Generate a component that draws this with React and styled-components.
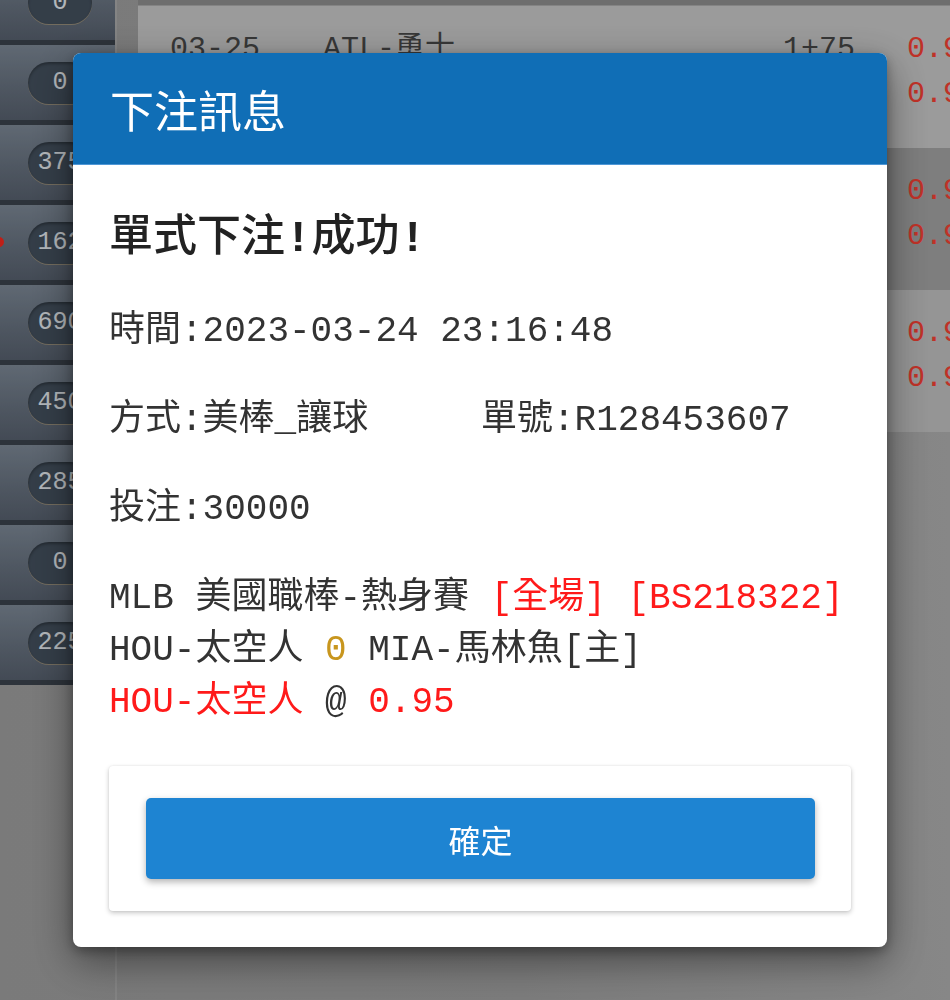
import React from "react";
import styled, { createGlobalStyle } from "styled-components";

const MONO = `"Courier New", "Liberation Mono", "Noto Sans CJK TC", monospace`;
const CJK = `"Noto Sans CJK TC", "Noto Sans", sans-serif`;

const GlobalStyle = createGlobalStyle`
  html, body { margin: 0; padding: 0; }
  body {
    width: 950px;
    height: 1000px;
    overflow: hidden;
    background: #a5a5a5;
    font-family: ${MONO};
  }
  * { box-sizing: border-box; }
`;

const Page = styled.div`
  display: flex;
  width: 950px;
  height: 1000px;
  overflow: hidden;
  background: linear-gradient(90deg, #a3a3a3 0%, #a6a6a6 55%, #b4b4b4 100%);
`;

const Sidebar = styled.aside`
  width: 117px;
  flex-shrink: 0;
  height: 100%;
  overflow: hidden;
  border-right: 2px solid #b0b0b0;
`;

const TileList = styled.div`
  display: flex;
  flex-direction: column;
  margin-top: -35px;
`;

const Tile = styled.div`
  position: relative;
  height: 80px;
  display: flex;
  align-items: center;
  padding-left: 28px;
  background: linear-gradient(180deg, #808c9a 0%, #6a7583 55%, #5a6472 100%);
  border-bottom: 5px solid #3d454f;
`;

const Pill = styled.span`
  width: 64px;
  height: 42px;
  border-radius: 21px;
  background: #465361;
  box-shadow: inset 0 2px 3px rgba(0, 0, 0, 0.3), 0 1px 0 #9a917e;
  display: flex;
  align-items: center;
  justify-content: center;
  font-family: ${MONO};
  font-size: 25px;
  color: #eef3f8;
`;

const Badge = styled.span`
  position: absolute;
  left: -6px;
  top: 50%;
  width: 10px;
  height: 10px;
  margin-top: -6px;
  border-radius: 50%;
  background: #ff2a1f;
`;

const Content = styled.main`
  flex: 1;
  display: flex;
  flex-direction: column;
  margin-left: 21px;
  min-width: 0;
`;

const TopStrip = styled.div`
  height: 6px;
  background: #939393;
  border-bottom: 1px solid #b0b0b0;
`;

const Row = styled.div`
  height: 142px;
  padding: 21px 0 0 32px;
  display: grid;
  grid-template-columns: 153px 1fr auto 43px;
  grid-auto-rows: 45px;
  font-family: ${MONO};
  font-size: 30px;
  line-height: 45px;
  color: #4a4a4a;
  background: ${(p) => p.$tone};
  white-space: nowrap;
`;

const Cell = styled.span`
  grid-column: ${(p) => p.$col};
  grid-row: ${(p) => p.$row};
  text-align: ${(p) => (p.$right ? "right" : "left")};
  padding-right: ${(p) => (p.$right ? "52px" : "0")};
  color: ${(p) => (p.$red ? "#ff4335" : "inherit")};
  overflow: visible;
`;

const Overlay = styled.div`
  position: fixed;
  inset: 0;
  background: rgba(0, 0, 0, 0.25);
  display: flex;
  align-items: center;
  justify-content: center;
  padding-left: 10px;
`;

const Modal = styled.section`
  width: 814px;
  background: #fff;
  border-radius: 8px;
  overflow: hidden;
  display: flex;
  flex-direction: column;
  box-shadow: 0 14px 40px rgba(0, 0, 0, 0.45), 0 4px 12px rgba(0, 0, 0, 0.3);
`;

const Header = styled.header`
  height: 112px;
  background: #106eb6;
  border-bottom: 1px solid #4f97d6;
  display: flex;
  align-items: center;
  padding-left: 37px;
`;

const HeaderTitle = styled.h2`
  margin: 0;
  font-family: ${CJK};
  font-size: 44px;
  font-weight: 400;
  line-height: 1;
  color: #fff;
`;

const Body = styled.div`
  padding: 44px 36px 36px 36px;
  display: flex;
  flex-direction: column;
  gap: 37px;
  font-family: ${MONO};
  font-size: 36px;
  color: #333;
`;

const Title = styled.h3`
  margin: 0;
  font-family: ${MONO};
  font-size: 44px;
  font-weight: 500;
  line-height: 60px;
  color: #222;
`;

const Bang = styled.span`
  font-weight: 700;
`;

const Line = styled.div`
  line-height: 52px;
  white-space: nowrap;
`;

const Pair = styled.div`
  display: grid;
  grid-template-columns: 372px auto;
  line-height: 52px;
  white-space: nowrap;
`;

const MatchBlock = styled.div`
  display: flex;
  flex-direction: column;
`;

const Red = styled.span`
  color: #ff1a1a;
`;

const Gold = styled.span`
  color: #c8961e;
`;

const Card = styled.div`
  background: #fff;
  border-radius: 4px;
  padding: 32px 36px 32px 37px;
  box-shadow: 0 2px 5px rgba(0, 0, 0, 0.22), 0 0 2px rgba(0, 0, 0, 0.08);
`;

const ConfirmButton = styled.button`
  display: block;
  width: 100%;
  height: 81px;
  border: none;
  border-radius: 5px;
  background: #1e84d2;
  color: #fff;
  font-family: ${CJK};
  font-size: 32px;
  font-weight: 400;
  box-shadow: 0 3px 7px rgba(0, 0, 0, 0.3);
  cursor: pointer;
`;

const tiles = [
  { n: "0" },
  { n: "0" },
  { n: "375" },
  { n: "162", badge: true },
  { n: "690" },
  { n: "450" },
  { n: "285" },
  { n: "0" },
  { n: "225" },
];

const games = [
  { tone: "#cfcfcf", date: "03-25", home: "ATL-勇士", away: "BOS-紅襪", hcap: "1+75", odds: ["0.95", "0.95"] },
  { tone: "#a8a8a8", date: "03-25", home: "NYY-洋基", away: "TOR-藍鳥", hcap: "1-50", odds: ["0.95", "0.95"] },
  { tone: "#c7c7c7", date: "03-25", home: "LAD-道奇", away: "SF-巨人", hcap: "0+50", odds: ["0.95", "0.95"] },
];

export default function App() {
  return (
    <>
      <GlobalStyle />
      <Page>
        <Sidebar>
          <TileList>
            {tiles.map((t, i) => (
              <Tile key={i}>
                {t.badge && <Badge />}
                <Pill>{t.n}</Pill>
              </Tile>
            ))}
          </TileList>
        </Sidebar>
        <Content>
          <TopStrip />
          {games.map((g, i) => (
            <Row key={i} $tone={g.tone}>
              <Cell $col={1} $row={1}>{g.date}</Cell>
              <Cell $col={2} $row={1}>{g.home}</Cell>
              <Cell $col={2} $row={2}>{g.away}</Cell>
              <Cell $col={3} $row={1} $right>{g.hcap}</Cell>
              <Cell $col={4} $row={1} $red>{g.odds[0]}</Cell>
              <Cell $col={4} $row={2} $red>{g.odds[1]}</Cell>
            </Row>
          ))}
        </Content>
      </Page>
      <Overlay>
        <Modal>
          <Header>
            <HeaderTitle>下注訊息</HeaderTitle>
          </Header>
          <Body>
            <Title>
              單式下注<Bang>!</Bang>成功<Bang>!</Bang>
            </Title>
            <Line>時間:2023-03-24 23:16:48</Line>
            <Pair>
              <span>方式:美棒_讓球</span>
              <span>單號:R128453607</span>
            </Pair>
            <Line>投注:30000</Line>
            <MatchBlock>
              <Line>
                MLB 美國職棒-熱身賽 <Red>[全場]</Red> <Red>[BS218322]</Red>
              </Line>
              <Line>
                HOU-太空人 <Gold>0</Gold> MIA-馬林魚[主]
              </Line>
              <Line>
                <Red>HOU-太空人</Red> @ <Red>0.95</Red>
              </Line>
            </MatchBlock>
            <Card>
              <ConfirmButton type="button">確定</ConfirmButton>
            </Card>
          </Body>
        </Modal>
      </Overlay>
    </>
  );
}
